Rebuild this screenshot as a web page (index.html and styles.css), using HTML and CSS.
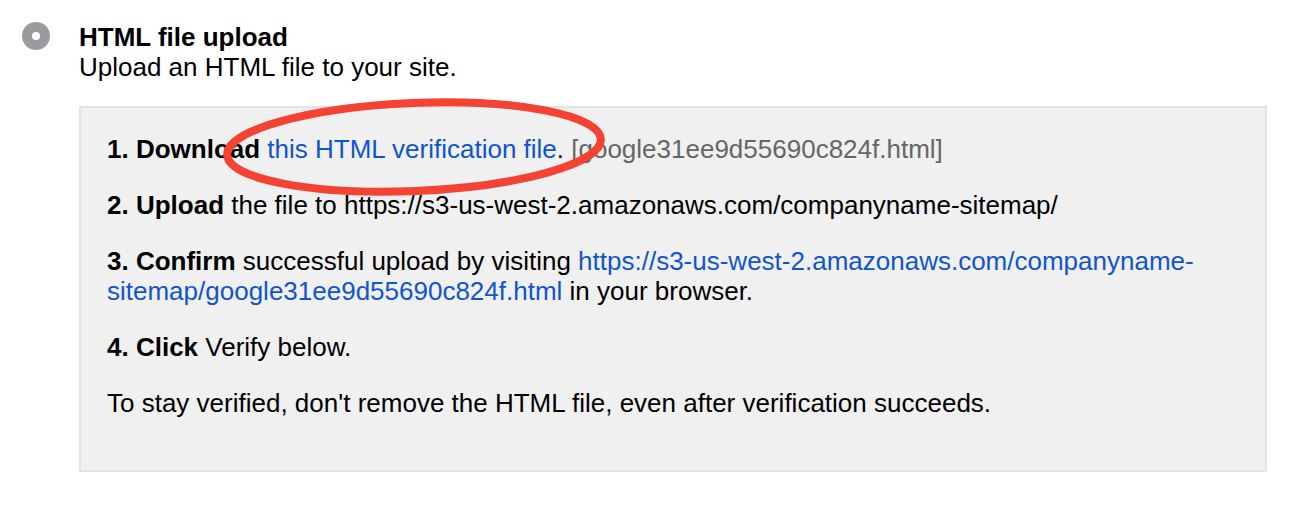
FILE: index.html
```html
<!DOCTYPE html>
<html>
<head>
    <title>HTML file upload</title>
    <link rel="stylesheet" href="styles.css">
</head>
<body>
    <div class="page">
        <div class="option">
            <span class="radio"><span class="radio-dot"></span></span>
            <div class="option-body">
                <h2 class="option-title">HTML file upload</h2>
                <p class="option-desc">Upload an HTML file to your site.</p>

                <div class="steps">
                    <p><b>1. Download</b> <a href="#">this HTML verification file</a>. <span class="filename">[google31ee9d55690c824f.html]</span></p>
                    <p><b>2. Upload</b> the file to https://s3-us-west-2.amazonaws.com/companyname-sitemap/</p>
                    <p><b>3. Confirm</b> successful upload by visiting <a href="#">https://s3-us-west-2.amazonaws.com/companyname-sitemap/google31ee9d55690c824f.html</a> in your browser.</p>
                    <p><b>4. Click</b> Verify below.</p>
                    <p>To stay verified, don't remove the HTML file, even after verification succeeds.</p>
                </div>
            </div>
        </div>

        <!-- red annotation drawn over the screenshot -->
        <svg class="annotation" width="400" height="110" viewBox="0 0 400 110">
            <ellipse cx="200" cy="57" rx="187" ry="44" fill="none" stroke="#f44333" stroke-width="8" transform="rotate(-2.4 200 57)"/>
        </svg>
    </div>
</body>
</html>
```

FILE: styles.css
```css
body {
    margin: 0;
    background-color: white;
    color: black;
    font-family: "Liberation Sans", Arial, sans-serif;
    font-size: 26px;
    line-height: 30px;
}
.page {
    position: relative;
    width: 1316px;
    height: 512px;
}
.option {
    display: flex;
    gap: 29px;
    padding: 22px 0 0 22px;
}
.radio {
    flex: none;
    width: 28px;
    height: 28px;
    border-radius: 50%;
    background-color: #9b9b9f;
    display: flex;
    align-items: center;
    justify-content: center;
}
.radio-dot {
    width: 8px;
    height: 8px;
    border-radius: 50%;
    background-color: white;
}
.option-body {
    width: 1188px;
}
.option-title {
    margin: 0;
    font-size: 26px;
    font-weight: bold;
    line-height: 30px;
}
.option-desc {
    margin: 0 0 24px 0;
}
.steps {
    background-color: #f0f0f0;
    border: 2px solid #e3e3e3;
    padding: 26px 26px;
}
.steps p {
    margin: 0 0 26px 0;
}
.steps a {
    color: #1155cc;
    text-decoration: none;
}
.filename {
    color: #666;
}
.annotation {
    position: absolute;
    left: 214px;
    top: 90px;
}
```
